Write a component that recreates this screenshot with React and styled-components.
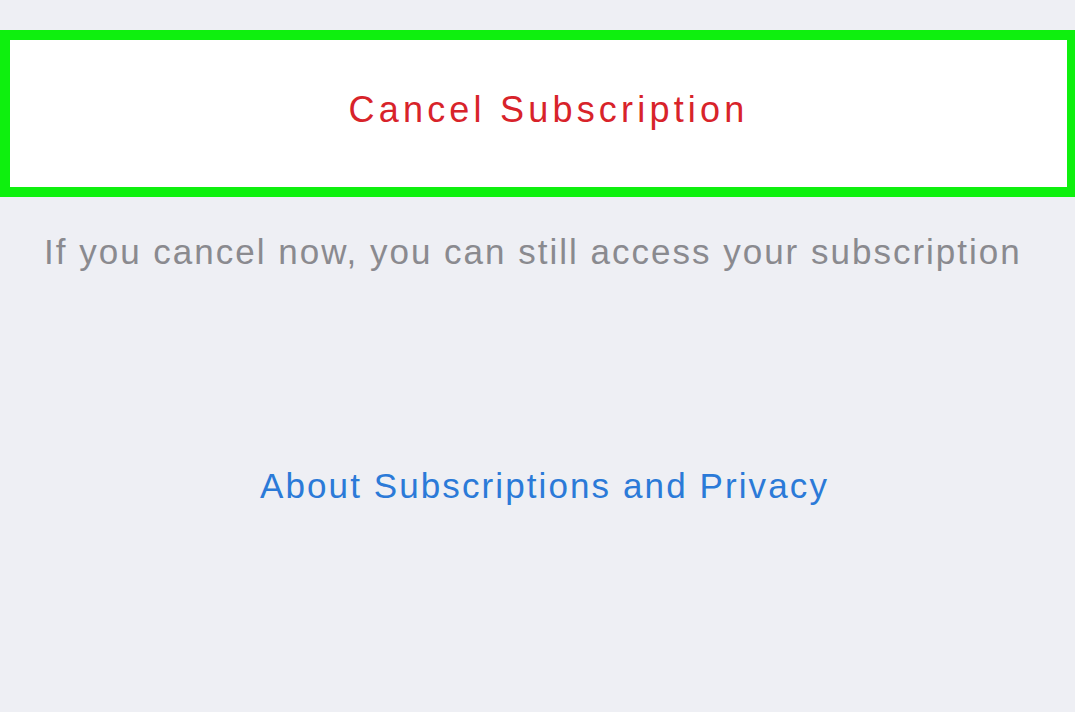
import React from "react";
import styled, { createGlobalStyle } from "styled-components";

const GlobalStyle = createGlobalStyle`
  html, body {
    margin: 0;
    padding: 0;
    background: #eeeff4;
    font-family: "Liberation Sans", Arial, sans-serif;
  }
`;

const Page = styled.div`
  display: flex;
  flex-direction: column;
  min-height: 712px;
  padding-top: 30px;
  box-sizing: border-box;
`;

// the highlighted cell around the destructive action
const ActionCell = styled.button`
  display: flex;
  align-items: center;
  justify-content: center;
  height: 167px;
  width: 100%;
  box-sizing: border-box;
  border: 10px solid #0ef00e;
  border-right-width: 8px;
  background: #ffffff;
  color: #d8232a;
  font-family: inherit;
  font-size: 36px;
  line-height: 36px;
  letter-spacing: 4.2px;
  padding: 0 0 8px 20px;
  cursor: pointer;
`;

const Caption = styled.p`
  margin: 37px 0 0 44px;
  color: #8a8a8f;
  font-size: 35px;
  line-height: 35px;
  letter-spacing: 2px;
  white-space: nowrap;
`;

const LinkRow = styled.div`
  display: flex;
  justify-content: center;
  margin-top: 199px;
  padding-left: 14px;
`;

const Link = styled.a`
  color: #2b7ad8;
  font-size: 35px;
  line-height: 35px;
  letter-spacing: 2.1px;
  text-decoration: none;
  cursor: pointer;
`;

export default function App() {
  return (
    <>
      <GlobalStyle />
      <Page>
        <ActionCell>Cancel Subscription</ActionCell>
        <Caption>If you cancel now, you can still access your subscription</Caption>
        <LinkRow>
          <Link>About Subscriptions and Privacy</Link>
        </LinkRow>
      </Page>
    </>
  );
}
